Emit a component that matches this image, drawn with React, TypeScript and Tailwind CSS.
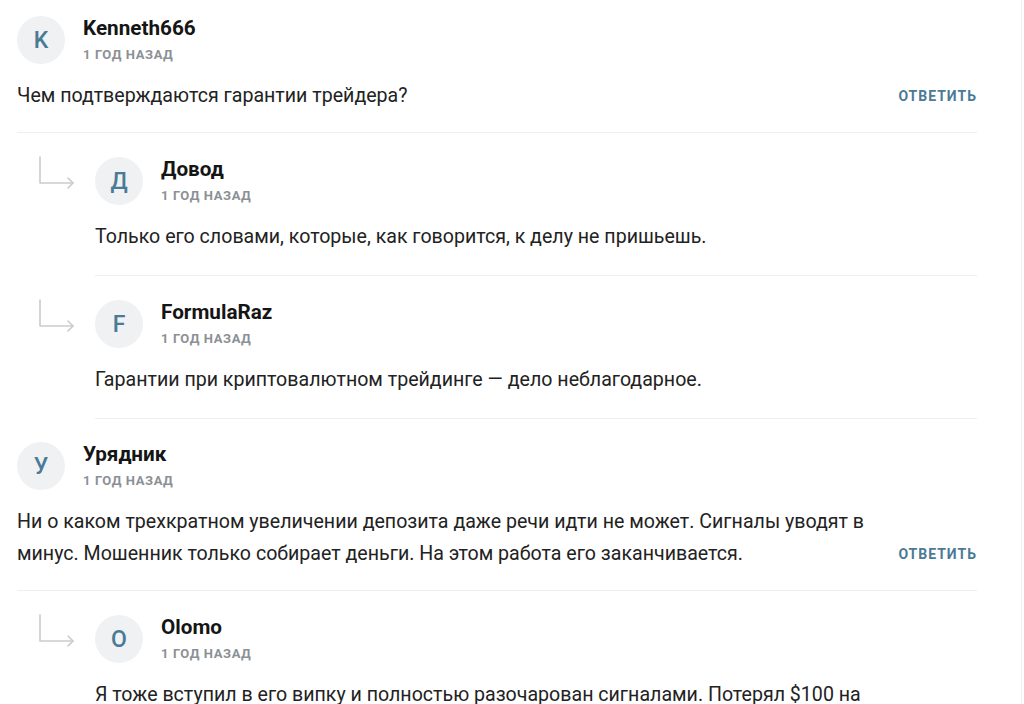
import React from "react";

const ReplyArrow = () => (
  <svg width="40" height="36" viewBox="0 0 40 36" fill="none" className="block">
    <path d="M2 1 V27 H35" stroke="#c9cbce" strokeWidth="1.6" strokeLinecap="round" strokeLinejoin="round" />
    <path d="M30 22 L35 27 L30 32" stroke="#c9cbce" strokeWidth="1.6" strokeLinecap="round" strokeLinejoin="round" />
  </svg>
);

const Avatar = ({ letter }: { letter: string }) => (
  <div className="w-[48px] h-[48px] rounded-full bg-[#f0f1f3] flex items-center justify-center shrink-0">
    <span className="text-[23px] font-medium text-[#4a7a96] leading-none">{letter}</span>
  </div>
);

const Header = ({ letter, name }: { letter: string; name: string }) => (
  <div className="flex gap-[18px]">
    <Avatar letter={letter} />
    <div className="flex flex-col">
      <div className="text-[20.7px] leading-[24px] font-bold text-[#151515]">{name}</div>
      <div className="mt-[7px] text-[13px] leading-[16px] font-bold tracking-[0.6px] text-[#8c9095]">1 ГОД НАЗАД</div>
    </div>
  </div>
);

const Reply = () => (
  <button className="shrink-0 text-[14px] leading-[32px] font-bold tracking-[1px] text-[#4b7a95]">ОТВЕТИТЬ</button>
);

const Top = ({ letter, name, children, first }: { letter: string; name: string; children: React.ReactNode; first?: boolean }) => (
  <div className={`${first ? "pt-[16px]" : "pt-[23px]"} pb-[20px] border-b border-[#eceef0]`}>
    <Header letter={letter} name={name} />
    <div className="mt-[16px] flex items-end justify-between gap-4">
      <p className="text-[19.6px] leading-[32px] text-[#222]">{children}</p>
      <Reply />
    </div>
  </div>
);

const Nested = ({ letter, name, children }: { letter: string; name: string; children: React.ReactNode }) => (
  <div className="flex">
    <div className="w-[78px] shrink-0 pt-[23px] pl-[21px]">
      <ReplyArrow />
    </div>
    <div className="flex-1 pt-[24px] pb-[22px] border-b border-[#eceef0]">
      <Header letter={letter} name={name} />
      <p className="mt-[16px] text-[19.6px] leading-[32px] text-[#222]">{children}</p>
    </div>
  </div>
);

export default function App() {
  return (
    <div className="w-[1024px] h-[704px] overflow-hidden bg-white relative" style={{ fontFamily: "Roboto, 'Noto Sans', sans-serif" }}>
      <div className="absolute right-[2px] top-0 bottom-0 w-px bg-[#eef0f2]" />
      <div className="ml-[17px] w-[960px]">
        <Top first letter="K" name="Kenneth666">
          Чем подтверждаются гарантии трейдера?
        </Top>
        <Nested letter="Д" name="Довод">
          Только его словами, которые, как говорится, к делу не пришьешь.
        </Nested>
        <Nested letter="F" name="FormulaRaz">
          Гарантии при криптовалютном трейдинге — дело неблагодарное.
        </Nested>
        <Top letter="У" name="Урядник">
          Ни о каком трехкратном увеличении депозита даже речи идти не может. Сигналы уводят в
          <br />
          минус. Мошенник только собирает деньги. На этом работа его заканчивается.
        </Top>
        <Nested letter="O" name="Olomo">
          Я тоже вступил в его випку и полностью разочарован сигналами. Потерял $100 на
          <br />
          первой же сделке.
        </Nested>
      </div>
    </div>
  );
}
